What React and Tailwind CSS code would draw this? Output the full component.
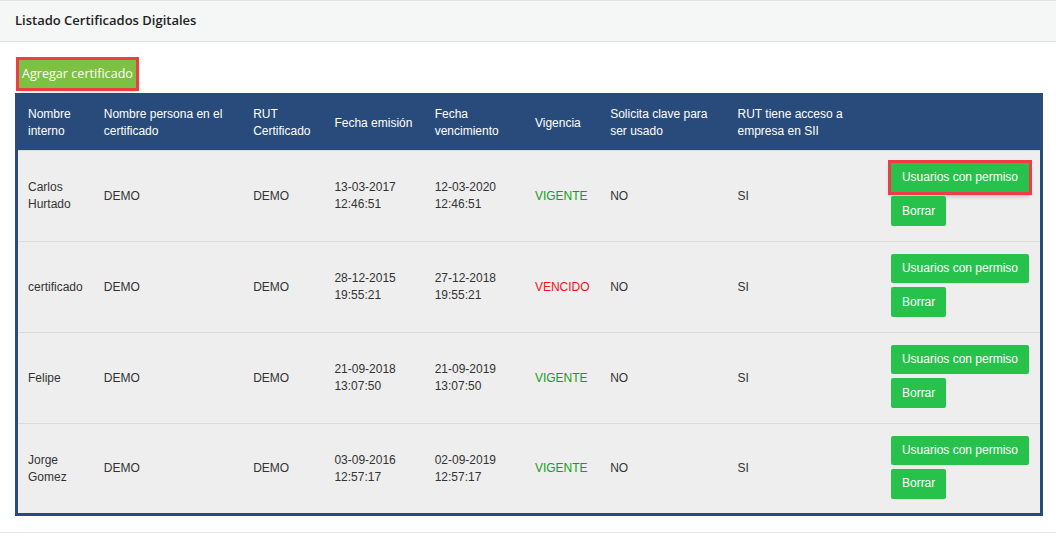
import React from "react";

const rows = [
  { n: ["Carlos", "Hurtado"], e: ["13-03-2017", "12:46:51"], v: ["12-03-2020", "12:46:51"], ok: true, hl: true },
  { n: ["certificado"], e: ["28-12-2015", "19:55:21"], v: ["27-12-2018", "19:55:21"], ok: false },
  { n: ["Felipe"], e: ["21-09-2018", "13:07:50"], v: ["21-09-2019", "13:07:50"], ok: true },
  { n: ["Jorge", "Gomez"], e: ["03-09-2016", "12:57:17"], v: ["02-09-2019", "12:57:17"], ok: true },
];

const heads = [
  ["Nombre", "interno"],
  ["Nombre persona en el", "certificado"],
  ["RUT", "Certificado"],
  ["Fecha emisión"],
  ["Fecha", "vencimiento"],
  ["Vigencia"],
  ["Solicita clave para", "ser usado"],
  ["RUT tiene acceso a", "empresa en SII"],
  [],
];

const widths = ["w-[77px]", "w-[149px]", "w-[81px]", "w-[100px]", "w-[100px]", "w-[75px]", "w-[127px]", "w-[153px]", "w-[160px]"];

function Lines({ l }) {
  return (
    <>
      {l.map((t, i) => (
        <div key={i}>{t}</div>
      ))}
    </>
  );
}

export default function App() {
  return (
    <div className="w-[1056px] h-[534px] bg-white overflow-hidden" style={{ fontFamily: "'Liberation Sans', Arial, sans-serif" }}>
      <div className="h-[42px] border-t border-b border-[#e1e5e6] bg-[#f5f6f6] pl-[15px] flex items-center">
        <span className="text-[13px] font-semibold text-[#222222]" style={{ fontFamily: "'Open Sans', sans-serif" }}>
          Listado Certificados Digitales
        </span>
      </div>
      <div className="px-[15px] pt-[18px] pb-[16px] border-b border-[#e1e5e6]">
        <div className="ml-[4px] mb-[5px]">
          <button
            className="h-[28px] px-[3px] bg-[#7cc142] text-white text-[12.6px] outline-3 outline-solid outline-[#ef3d45] shadow-[0_2px_4px_rgba(0,0,0,0.35)] leading-none"
            style={{ fontFamily: "'Open Sans', sans-serif" }}
          >
            Agregar certificado
          </button>
        </div>
        <table className="w-[1028px] border-[3px] border-[#284b7b] border-collapse table-fixed text-[12px] leading-[17px]">
          <thead>
            <tr className="bg-[#284b7b] text-white h-[56px]">
              {heads.map((h, i) => (
                <th key={i} className={`${widths[i]} text-left font-normal align-middle pl-[10px] pr-[4px]`}>
                  <Lines l={h} />
                </th>
              ))}
            </tr>
          </thead>
          <tbody>
            {rows.map((r, i) => (
              <tr key={i} className="bg-[#eeeeee] text-[#333333] border-t border-[#dcdcdc] h-[91px]">
                <td className="pl-[10px] align-middle"><Lines l={r.n} /></td>
                <td className="pl-[10px] align-middle">DEMO</td>
                <td className="pl-[10px] align-middle">DEMO</td>
                <td className="pl-[10px] align-middle"><Lines l={r.e} /></td>
                <td className="pl-[10px] align-middle"><Lines l={r.v} /></td>
                <td className={`pl-[10px] align-middle ${r.ok ? "text-[#14a014]" : "text-[#f5101e]"}`}>{r.ok ? "VIGENTE" : "VENCIDO"}</td>
                <td className="pl-[10px] align-middle">NO</td>
                <td className="pl-[10px] align-middle">SI</td>
                <td className="pl-[10px] align-middle">
                  <div className="flex flex-col items-start gap-[4px] pb-[3px]">
                    <button
                      className={`h-[29px] px-[11px] bg-[#27c24c] text-white text-[12px] ${r.hl ? "outline-3 outline-solid outline-[#ef3d45] shadow-[0_3px_5px_rgba(0,0,0,0.35)]" : "rounded-[2px]"}`}
                    >
                      Usuarios con permiso
                    </button>
                    <button className="h-[30px] px-[11px] bg-[#27c24c] text-white text-[12px] rounded-[2px]">Borrar</button>
                  </div>
                </td>
              </tr>
            ))}
          </tbody>
        </table>
      </div>
    </div>
  );
}
